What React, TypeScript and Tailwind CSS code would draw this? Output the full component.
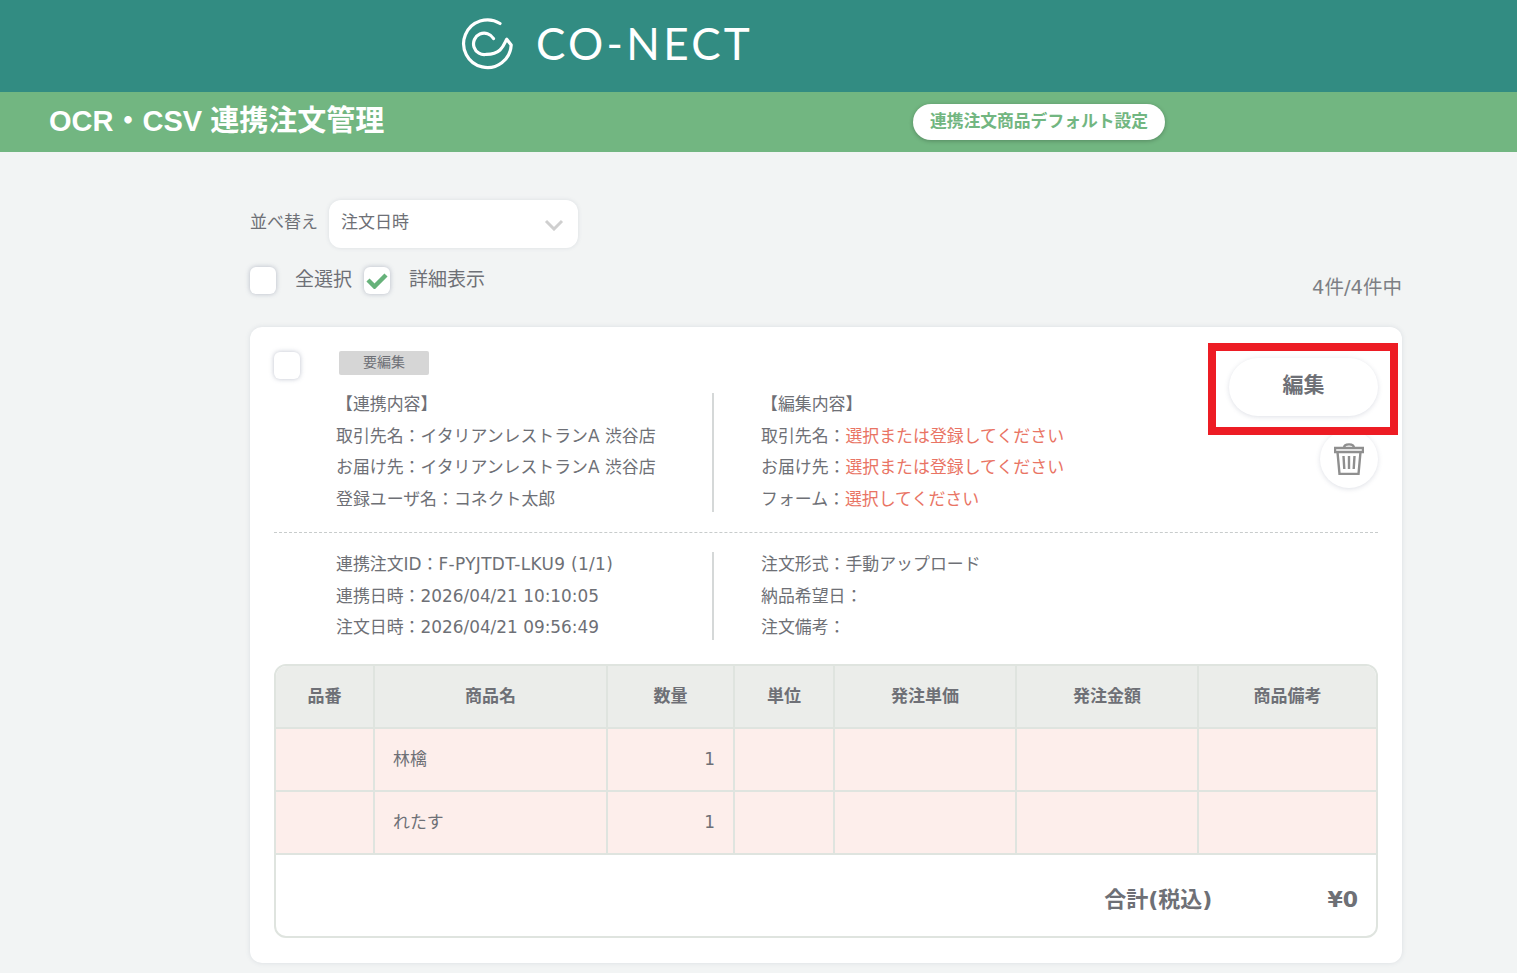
import React from 'react';

const COLS = 'grid grid-cols-[99px_233px_127px_100px_182px_182px_1fr]';

const headers = ['品番', '商品名', '数量', '単位', '発注単価', '発注金額', '商品備考'];

const rows = [
  { name: '林檎', qty: 1 },
  { name: 'れたす', qty: 1 },
];

const Checkbox = ({ checked = false }: { checked?: boolean }) => (
  <span className="flex h-[27px] w-[26px] shrink-0 items-center justify-center rounded-md bg-white shadow-[0_0_5px_rgba(90,100,130,0.4)]">
    {checked && (
      <svg width="22" height="17" viewBox="0 0 22 17" fill="none">
        <path d="M2 8l6.5 6.5L20 3" stroke="#66b27a" strokeWidth="4.4" />
      </svg>
    )}
  </span>
);

const Logo = () => (
  <div className="flex items-center">
    <svg className="mb-1" width="52" height="52" viewBox="0 0 52 52" fill="none" stroke="#fff" strokeWidth="3.2" strokeLinecap="round" strokeLinejoin="round">
      <path d="M39 5.5A23.8 23.8 0 1 0 50.2 27L45.7 21.2C43 26 41 36.3 25.5 36.3A10.7 10.7 0 1 1 32.5 20.5" />
    </svg>
    <span className="mb-[6px] ml-[23px] [font-family:Lato,sans-serif] text-[44px] leading-none font-normal tracking-[3.3px] text-white">
      CO-NECT
    </span>
  </div>
);

const InfoLine = ({ children }: { children: React.ReactNode }) => (
  <p className="h-[31.5px] leading-[31.5px] whitespace-nowrap">{children}</p>
);

const Red = ({ children }: { children: React.ReactNode }) => <span className="text-[#e97464]">{children}</span>;

export default function App() {
  return (
    <div className="min-h-screen overflow-hidden bg-[#f2f4f4] [font-family:'DejaVu_Sans','Noto_Sans_CJK_JP',sans-serif] text-[#6e7076]">
      <header className="flex h-[92px] items-center bg-[#328c82] pl-[461px]">
        <Logo />
      </header>
      <div className="flex h-[60px] items-center bg-[#72b681] pl-[49px]">
        <h1 className="w-[864px] [font-family:'Liberation_Sans','Noto_Sans_CJK_JP',sans-serif] text-[29px] font-bold text-white">OCR・CSV 連携注文管理</h1>
        <button className="flex h-9 w-[252px] items-center justify-center rounded-full bg-white text-[16.8px] font-bold text-[#72b681] shadow-[0_1px_4px_rgba(0,0,0,0.25)]">
          連携注文商品デフォルト設定
        </button>
      </div>

      <main className="ml-[250px] w-[1152px] pt-12 pb-[10px]">
        <div className="flex items-center">
          <span className="w-[79px] pb-[2px] text-[17px]">並べ替え</span>
          <div className="flex h-12 w-[249px] items-center justify-between rounded-xl bg-white pr-[14px] pb-[2px] pl-3 text-[17px] shadow-[0_0_4px_rgba(90,100,130,0.15)]">
            注文日時
            <svg className="mt-[3px]" width="20" height="12" viewBox="0 0 20 12" fill="none">
              <path d="M2 2l8 8 8-8" stroke="#cfcfcf" strokeWidth="3" />
            </svg>
          </div>
        </div>

        <div className="mt-[19px] flex h-[60px] items-start justify-between">
          <div className="flex items-center">
            <Checkbox />
            <span className="mr-3 ml-[19px] -mt-[2px] text-[19px]">全選択</span>
            <Checkbox checked />
            <span className="ml-[19px] -mt-[2px] text-[19px]">詳細表示</span>
          </div>
          <span className="mt-[6px] text-[19.5px] text-[#7d7f84]">4件/4件中</span>
        </div>

        <section className="relative h-[636px] rounded-xl bg-white px-6 pt-6 text-[16.9px] shadow-[0_0_5px_rgba(90,100,130,0.15)]">
          <div className="flex h-[161px] justify-between">
            <div>
              <div className="flex h-[38px] items-start">
                <span className="mt-px">
                  <Checkbox />
                </span>
                <span className="ml-[39px] flex h-6 w-[90px] items-center justify-center rounded-[2px] bg-[#d6d6d6] pb-px text-[14px]">要編集</span>
              </div>
              <div className="flex">
                <div className="w-[438px] pl-[62px]">
                  <InfoLine>【連携内容】</InfoLine>
                  <InfoLine>取引先名：イタリアンレストランA 渋谷店</InfoLine>
                  <InfoLine>お届け先：イタリアンレストランA 渋谷店</InfoLine>
                  <InfoLine>登録ユーザ名：コネクト太郎</InfoLine>
                </div>
                <div className="mt-1 h-[119px] w-[2px] bg-[#d5d8d8]" />
                <div className="pl-[47px]">
                  <InfoLine>【編集内容】</InfoLine>
                  <InfoLine>取引先名：<Red>選択または登録してください</Red></InfoLine>
                  <InfoLine>お届け先：<Red>選択または登録してください</Red></InfoLine>
                  <InfoLine>フォーム：<Red>選択してください</Red></InfoLine>
                </div>
              </div>
            </div>
            <div className="flex flex-col items-end pt-[7px]">
              <button className="h-[58px] w-[149px] rounded-full bg-white pb-[2px] text-[21px] font-bold shadow-[0_1px_5px_rgba(90,100,130,0.2)]">編集</button>
              <button className="mt-[14px] flex h-[58px] w-[58px] items-center justify-center rounded-full bg-white shadow-[0_1px_5px_rgba(90,100,130,0.2)]">
                <svg width="30" height="32" viewBox="0 0 30 32" fill="none" stroke="#8f8f8f" strokeWidth="2.4">
                  <path d="M1 5h28v4H1zM10 5c0-2.6 1.6-3.6 5-3.6s5 1 5 3.6" />
                  <path d="M3.5 9l2 22h19l2-22" />
                  <path d="M9.5 13l.8 13M15 13v13M20.5 13l-.8 13" />
                </svg>
              </button>
            </div>
          </div>

          <div className="mt-5 border-t border-dashed border-[#c8cccc]" />

          <div className="mt-[19px] flex h-[88px]">
            <div className="-mt-[3px] w-[438px] pl-[62px]">
              <InfoLine>連携注文ID：<span className="tracking-[0.35px]">F-PYJTDT-LKU9 (1/1)</span></InfoLine>
              <InfoLine>連携日時：2026/04/21 10:10:05</InfoLine>
              <InfoLine>注文日時：2026/04/21 09:56:49</InfoLine>
            </div>
            <div className="w-[2px] bg-[#d5d8d8]" />
            <div className="-mt-[3px] pl-[47px]">
              <InfoLine>注文形式：手動アップロード</InfoLine>
              <InfoLine>納品希望日：</InfoLine>
              <InfoLine>注文備考：</InfoLine>
            </div>
          </div>

          <div className="mt-6 h-[274px] overflow-hidden rounded-xl border-2 border-[#dfe4df]">
            <div className={`${COLS} h-[63px] border-b-2 border-[#dfe4df] bg-[#ebedea] text-[17px] font-bold`}>
              {headers.map((h, i) => (
                <div key={h} className={`flex items-center justify-center ${i < 6 ? 'border-r-2 border-[#dfe4df]' : ''}`}>
                  {h}
                </div>
              ))}
            </div>
            {rows.map((r) => (
              <div key={r.name} className={`${COLS} h-[63px] border-b-2 border-[#dfe4df] bg-[#fdeeeb]`}>
                <div className="border-r-2 border-[#dfe4df]" />
                <div className="flex items-center border-r-2 border-[#dfe4df] pt-px pl-[18px]">{r.name}</div>
                <div className="flex items-center justify-end border-r-2 border-[#dfe4df] pt-px pr-[18px]">{r.qty}</div>
                <div className="border-r-2 border-[#dfe4df]" />
                <div className="border-r-2 border-[#dfe4df]" />
                <div className="border-r-2 border-[#dfe4df]" />
                <div />
              </div>
            ))}
            <div className="flex h-[83px] items-center justify-end pt-[5px] pr-[18px] text-[22px] font-bold">
              <span>合計(税込)</span>
              <span className="ml-[115px]">¥0</span>
            </div>
          </div>

          <div className="absolute top-4 left-[958px] h-[92px] w-[190px] border-8 border-[#ed1c24]" />
        </section>
      </main>
    </div>
  );
}
